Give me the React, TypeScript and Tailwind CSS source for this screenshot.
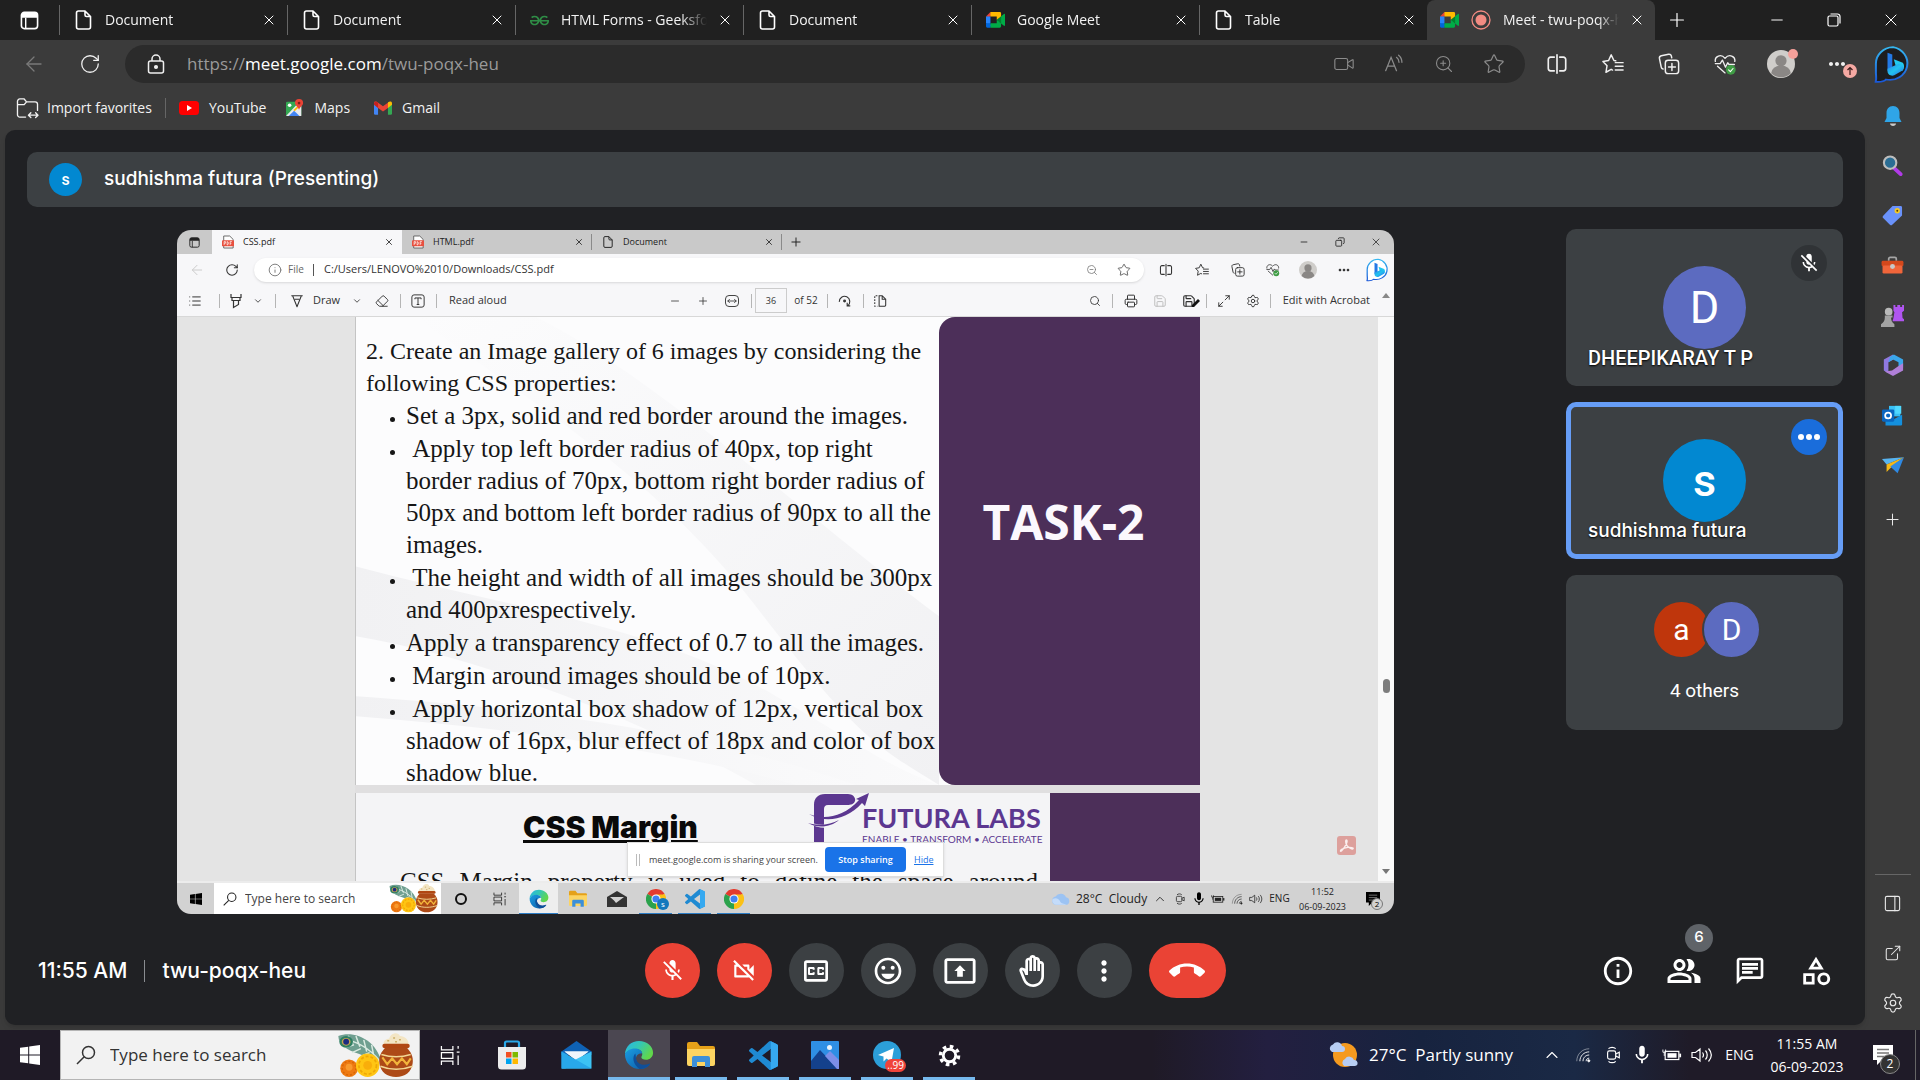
import React from "react";
import {
  ArrowLeft, RotateCw, Video, ZoomIn, ZoomOut, Star, X, Plus, Minus, Search, Settings,
  ChevronDown, ChevronUp, Eraser, Printer, Save, Maximize2, Info, List, ExternalLink, PanelRight, MoveHorizontal, Copy,
} from "lucide-react";
import {
  MdMicOff, MdOutlineVideocamOff, MdOutlineClosedCaption, MdMoreVert, MdCallEnd, MdInfoOutline, MdOutlinePeopleAlt,
  MdOutlineChat, MdOutlineCategory, MdOutlinePresentToAll, MdOutlineBackHand, MdMoreHoriz, MdOutlineEmojiEmotions, MdMic,
} from "react-icons/md";
import { SiGeeksforgeeks } from "react-icons/si";

type Kids = { children?: React.ReactNode };
type Cls = { className?: string };

/* ---------- drawings ---------- */

const DocIcon = ({ className = "" }: Cls) => (
  <svg viewBox="0 0 16 20" className={className} fill="none" stroke="currentColor" strokeWidth="1.6" strokeLinejoin="round">
    <path d="M3 1h6.500L15 6.500V17a2 2 0 0 1-2 2H3a2 2 0 0 1-2-2V3a2 2 0 0 1 2-2zM9.500 1v4a1.500 1.500 0 0 0 1.500 1.500h4" />
  </svg>
);

const TabActions = ({ className = "" }: Cls) => (
  <svg viewBox="0 0 20 20" className={className}>
    <rect x="1.500" y="1.500" width="17" height="17" rx="3" fill="none" stroke="currentColor" strokeWidth="1.700" />
    <path d="M1.500 4.500a3 3 0 0 1 3-3h11a3 3 0 0 1 3 3V7h-17z" fill="currentColor" />
    <path d="M6 7v11.500" stroke="currentColor" strokeWidth="1.500" />
  </svg>
);

const MeetLogo = ({ className = "" }: Cls) => (
  <svg viewBox="0 0 87.500 72" className={className}>
    <path fill="#00832d" d="M49.500 36l8.530 9.750 11.470 7.330 2-17.020-2-16.640-11.690 6.440z" />
    <path fill="#0066da" d="M0 51.500V66c0 3.315 2.685 6 6 6h14.500l3-10.960-3-9.540-9.950-3z" />
    <path fill="#e94235" d="M20.500 0L0 20.500l10.550 3 9.950-3 2.950-9.410z" />
    <path fill="#2684fc" d="M20.500 20.500H0v31h20.500z" />
    <path fill="#00ac47" d="M82.600 8.680L69.500 19.420v33.660l13.160 10.790c1.970 1.540 4.850.135 4.850-2.370V11c0-2.535-2.945-3.925-4.910-2.320zM49.500 36v15.500h-29V72h43c3.315 0 6-2.685 6-6V53.080z" />
    <path fill="#ffba00" d="M63.500 0h-43v20.500h29V36l20-16.570V6c0-3.315-2.685-6-6-6z" />
  </svg>
);

const PdfIcon = () => (
  <svg viewBox="0 0 14 16" className="h-3.5 w-3">
    <path d="M2 1h7l4 4v10H2z" fill="#fff" stroke="#555" />
    <rect x="0" y="6" width="14" height="7" rx="1" fill="#e8503f" />
    <path d="M2.500 11.500v-4h1.500v2H2.500M6 7.500v4c2 0 2-4 0-4M9.500 11.500v-4h2M9.500 9.500h1.500" stroke="#fff" strokeWidth=".8" fill="none" />
  </svg>
);

const Bing = ({ className = "", dark = false }: Cls & { dark?: boolean }) => (
  <svg viewBox="0 0 38 46" preserveAspectRatio="none" className={className}>
    <defs>
      <linearGradient id="bingRing" x1="0" y1="0" x2="0" y2="1"><stop offset="0" stopColor="#35b8f1" /><stop offset="1" stopColor="#1a58d8" /></linearGradient>
      <linearGradient id="bingB" x1="0" y1="0" x2="1" y2="1"><stop offset="0" stopColor="#2a7de8" /><stop offset=".5" stopColor="#22c3ee" /><stop offset="1" stopColor="#2a6df0" /></linearGradient>
    </defs>
    <path d="M19 2.500a17.500 19.500 0 1 1-7 38.200c-1.500 1.800-5.500 3.200-10.300 2.700 1-3.400.3-6 .2-10.400V22A17.500 19.500 0 0 1 19 2.500z" fill={dark ? "#1d1d1f" : "#fff"} stroke="url(#bingRing)" strokeWidth="2" />
    <path d="M13.500 9l4.800 2.300v15.400l-4.800 4z" fill="#2379e6" />
    <path d="M19.800 16.800l9 4.200c2 3 1.500 7.500-.8 9.600l-6-4.600z" fill="#22c9ee" />
    <path d="M13.500 28l5-2.500 6.500-3.500c4 .5 5.500 4.500 3.500 8.200l-8.300 5.600c-3 1.300-6.700-.8-6.700-4.800z" fill="url(#bingB)" />
  </svg>
);

const ReadAloud = () => (
  <svg viewBox="0 0 24 24" className="size-5" fill="none" stroke="currentColor" strokeWidth="1.500" strokeLinecap="round">
    <path d="M2 20L8.500 4 15 20M4.500 14.500h8M15 4c2 1.500 3 3.500 3 6M17.500 1.500c2.500 2 4 5 4 8.500" />
  </svg>
);

const Split = ({ className = "" }: Cls) => (
  <svg viewBox="0 0 24 24" className={className} fill="none" stroke="currentColor" strokeWidth="1.800" strokeLinecap="round">
    <path d="M12 2v20M9 4.500H5a2.500 2.500 0 0 0-2.500 2.500v10A2.500 2.500 0 0 0 5 19.500h4M15 4.500h4A2.500 2.500 0 0 1 21.500 7v10a2.500 2.500 0 0 1-2.500 2.500h-4" />
  </svg>
);

const Favs = ({ className = "" }: Cls) => (
  <svg viewBox="0 0 24 24" className={className} fill="none" stroke="currentColor" strokeWidth="1.600" strokeLinejoin="round" strokeLinecap="round">
    <path d="M15 8.500l-2-.3L10 2 7.200 8.200l-6.200 1 4.500 4.700L4.300 21l5.700-3.200 1.500.8M14.500 10.500H23M14.500 14.500H23M14.500 18.500H23" />
  </svg>
);

const Collections = ({ className = "" }: Cls) => (
  <svg viewBox="0 0 24 24" className={className} fill="none" stroke="currentColor" strokeWidth="1.600" strokeLinecap="round" strokeLinejoin="round">
    <rect x="8" y="8" width="14.500" height="14.500" rx="3" />
    <path d="M15.200 11.500v7.500M11.500 15.200H19M5.500 17.500c-1.200-.2-1.800-1-2-2L1.600 6.200c-.3-1.700.5-2.900 2-3.200l8-1.700c1.500-.2 2.600.5 3 2l.4 2" />
  </svg>
);

const Essentials = ({ className = "" }: Cls) => (
  <svg viewBox="0 0 26 26" className={className} fill="none" stroke="currentColor" strokeWidth="1.500" strokeLinecap="round" strokeLinejoin="round">
    <path d="M1.500 9.500C.5 3.500 8 .5 12.500 6 17 .5 24.500 3.500 23.500 9.500M1.500 12H7l2.500-4 3.500 8 2.500-5 1.500 2h6M4 15l8.500 7.500" />
    <circle cx="19" cy="19" r="5.500" fill="#3f9c45" stroke="none" />
    <path d="M16.500 19l2 2 3-3.500" stroke="#fff" strokeWidth="1.200" />
  </svg>
);

const Avatar = ({ className = "" }: Cls) => (
  <svg viewBox="0 0 30 30" className={className}>
    <circle cx="15" cy="15" r="15" fill="#cfcdca" />
    <circle cx="15" cy="11.500" r="6" fill="#8a8785" />
    <path d="M4.500 25a10.500 8.500 0 0 1 21 0A15 15 0 0 1 4.500 25z" fill="#8a8785" />
  </svg>
);

const Edge = ({ className = "" }: Cls) => (
  <svg viewBox="0 0 32 32" className={className}>
    <defs>
      <linearGradient id="edgeTop" x1="0" y1="0" x2="1" y2=".5"><stop offset="0" stopColor="#28b5e8" /><stop offset=".5" stopColor="#34c7b4" /><stop offset="1" stopColor="#61d74b" /></linearGradient>
      <linearGradient id="edgeLow" x1="0" y1="0" x2="1" y2="1"><stop offset="0" stopColor="#1b9de2" /><stop offset="1" stopColor="#0c59a4" /></linearGradient>
    </defs>
    <path d="M1 15C1.500 6.500 8 1 16 1c8.500 0 15 6 15 12.500 0 4.500-3.500 7.500-7.500 7.500-3 0-5-1-5-2.500 0-1 1-1.500 1-3.500 0-3-2.800-5.500-6.500-5.500C7.500 9.500 3 12 1 15z" fill="url(#edgeTop)" />
    <path d="M1 15c1.800-3.500 5.500-6 10.500-6 4 0 7.500 2 8 5-5 0-7.500 3.500-6.500 7.500 1.200 4.800 7.500 7.500 14.500 4.500C25 29.500 21 31 16.500 31 8 31 1 24.500 1 15z" fill="url(#edgeLow)" />
    <path d="M12 14.500c-3.500 4-2.500 11.500 4.500 16.300 4.500.2 8.500-1.500 11-4.800.5-.8 0-1-.6-.7-6 2.700-12.500.7-13.900-4.800-.5-2-.2-4.500-1-6z" fill="#0f4f99" />
  </svg>
);

const Chrome = ({ className = "" }: Cls) => (
  <svg viewBox="0 0 24 24" className={className}>
    <path d="M12 12L1.600 6A12 12 0 0 1 22.400 6z" fill="#e33b2e" />
    <path d="M12 12l10.400-6A12 12 0 0 1 12 24z" fill="#fbc116" />
    <path d="M12 12v12A12 12 0 0 1 1.600 6z" fill="#2ba24c" />
    <path d="M12 6.500h10.700L17 14z" fill="#fbc116" />
    <circle cx="12" cy="12" r="5.500" fill="#fff" />
    <circle cx="12" cy="12" r="4.300" fill="#3f7ff0" />
  </svg>
);

const VsCode = ({ className = "" }: Cls) => (
  <svg viewBox="0 0 24 24" className={className}>
    <path fill="#1f8ad2" d="M23.150 2.587L18.210.210a1.494 1.494 0 0 0-1.705.290l-9.460 8.630-4.120-3.128a.999.999 0 0 0-1.276.057L.327 7.261A1 1 0 0 0 .326 8.740L3.899 12 .326 15.260a1 1 0 0 0 .001 1.479L1.650 17.940a.999.999 0 0 0 1.276.057l4.120-3.128 9.460 8.630a1.492 1.492 0 0 0 1.704.290l4.942-2.377A1.500 1.500 0 0 0 24 20.060V3.939a1.500 1.500 0 0 0-.850-1.352zm-5.146 14.861L10.826 12l7.178-5.448v10.896z" />
    <path fill="#36a9f0" d="M18 .2l5.150 2.387A1.500 1.500 0 0 1 24 3.940v16.120a1.500 1.500 0 0 1-.850 1.350L18 23.800z" />
  </svg>
);

const Folder = ({ className = "" }: Cls) => (
  <svg viewBox="0 0 28 28" className={className}>
    <path d="M0 3a2 2 0 0 1 2-2h8l3 4h13a2 2 0 0 1 2 2v4H0z" fill="#e5a118" />
    <path d="M0 8h28v15a2 2 0 0 1-2 2H2a2 2 0 0 1-2-2z" fill="#fcd462" />
    <path d="M5 26v-9a2 2 0 0 1 2-2h14a2 2 0 0 1 2 2v9h-5v-5h-8v5z" fill="#3c8fd9" />
  </svg>
);

const Festival = ({ className = "" }: Cls) => (
  <svg viewBox="0 0 80 46" className={className}>
    <path d="M2 3C12-1 24 2 32 8c7 5 11 12 14 20-9-3-17-4-24-7C12 18 2 12 2 3z" fill="#6f9f90" />
    <path d="M6 6c14 2 28 10 38 22M12 3l5 8M20 3l4 11M28 7l3 12M8 15l10-3M16 20l9-4M27 23l7-3M36 12l2 10" stroke="#dcebe2" strokeWidth="1.500" fill="none" />
    <ellipse cx="10" cy="9" rx="7" ry="6" fill="#2f7f62" />
    <ellipse cx="10" cy="9" rx="4.500" ry="4" fill="#c9a350" />
    <circle cx="10" cy="9" r="3" fill="#1c2b80" />
    <circle cx="13" cy="36" r="9" fill="#ee7a12" />
    <circle cx="13" cy="36" r="7" fill="none" stroke="#d96606" strokeWidth="1.500" strokeDasharray="2 2" />
    <circle cx="13" cy="35" r="3.500" fill="#f99a2d" />
    <circle cx="32" cy="33" r="12" fill="#ffc513" />
    <circle cx="32" cy="33" r="9" fill="none" stroke="#efa805" strokeWidth="1.800" strokeDasharray="3 2" />
    <circle cx="32" cy="33" r="4.500" fill="#f9ae0a" />
    <path d="M48 12c0-4 3-6 6-6 1-6 9-8 11-3 5 0 9 4 9 9z" fill="#f3e5c4" />
    <path d="M52 8h2M58 5h2M64 7h2M60 9h2" stroke="#cdb06a" strokeWidth="1.500" />
    <rect x="47" y="11" width="28" height="4.500" rx="2.200" fill="#b04713" />
    <path d="M50 15h22c4 4 7 9 6 16-1 9-8 14-17 14s-16-5-17-14c-1-7 2-12 6-16z" fill="#ad4a17" />
    <path d="M46 22c10 3 20 3 30 0M45 34c10 4 22 4 33 0" stroke="#f2d795" strokeWidth="1.500" fill="none" />
    <path d="M47 25l5 7 5-6 5 6 5-6 5 6 4-6" stroke="#f2b53b" strokeWidth="2.200" fill="none" />
  </svg>
);

const WinLogo = ({ className = "" }: Cls) => (
  <svg viewBox="0 0 20 20" className={className} fill="currentColor">
    <path d="M0 2.800L8.200 1.700v7.800H0zM9.200 1.500L20 0v9.500H9.200zM0 10.500h8.200v7.800L0 17.200zM9.200 10.500H20V20L9.200 18.500z" />
  </svg>
);

const TaskView = ({ className = "" }: Cls) => (
  <svg viewBox="0 0 22 22" className={className} fill="none" stroke="currentColor" strokeWidth="1.300">
    <path d="M1.500 1v4h12V1M1.500 21v-4h12v4M1.500 8h12v6h-12zM19 1v3M19 11v10M17.500 7.500h3" />
  </svg>
);

const MagnifierThin = ({ className = "" }: Cls) => (
  <svg viewBox="0 0 20 20" className={className} fill="none" stroke="currentColor" strokeWidth="1.500">
    <circle cx="12.500" cy="7.500" r="6" /><path d="M8.200 11.800L1 19" />
  </svg>
);

const Wifi = ({ className = "" }: Cls) => (
  <svg viewBox="0 0 18 18" className={className} fill="none" stroke="currentColor">
    <path d="M2 16C2 8 8 2 16 2" opacity=".5" /><path d="M5.500 16C5.500 10 10 5.500 16 5.500M9 16c0-4 3-7 7-7M12.500 16c0-2 1.500-3.500 3.500-3.500" />
    <circle cx="15.500" cy="15.500" r="1.200" fill="currentColor" />
  </svg>
);

const CamTray = ({ className = "" }: Cls) => (
  <svg viewBox="0 0 18 20" className={className} fill="none" stroke="currentColor" strokeWidth="1.300">
    <rect x="3" y="5.500" width="9" height="9" rx="2" /><path d="M12 9l4-2v6l-4-2M4 3c2-2 6-2 8 0M4 17c2 2 6 2 8 0" />
  </svg>
);

const Battery = ({ className = "" }: Cls) => (
  <svg viewBox="0 0 22 14" className={className}>
    <rect x="3.500" y="3" width="15" height="9" fill="none" stroke="currentColor" strokeWidth="1.300" />
    <rect x="6" y="5" width="10" height="5" fill="currentColor" /><rect x="19" y="5.500" width="2" height="4" fill="currentColor" />
    <path d="M1 1v3h3V1M2.500 4v4" stroke="currentColor" fill="none" />
  </svg>
);

const Volume = ({ className = "" }: Cls) => (
  <svg viewBox="0 0 22 18" className={className} fill="none" stroke="currentColor" strokeWidth="1.200">
    <path d="M1 6.500h3.500L9 3v12l-4.500-3.500H1zM11.500 6.500c1.200 1.500 1.200 3.500 0 5M14.500 4.500c2.300 2.500 2.300 6.500 0 9M17.500 2.500c3.500 4 3.500 9 0 13" />
  </svg>
);

const Notif = ({ className = "" }: Cls) => (
  <svg viewBox="0 0 20 20" className={className}>
    <path d="M0 0h20v15H9l-5 5v-5H0z" fill="currentColor" />
    <path d="M4 4.500h12M4 8h12M4 11.500h8" stroke="#777" strokeWidth="1.300" />
  </svg>
);

const Cloud = ({ className = "" }: Cls) => (
  <svg viewBox="0 0 24 16" className={className}>
    <path d="M6 15a5 5 0 0 1-.5-9.900A7 7 0 0 1 18 6a4.600 4.600 0 0 1 .5 9z" fill="#9cc3f3" />
    <path d="M6 15a5 5 0 0 1-4-7c4-2 8 0 9 3s5 2 7 4z" fill="#c4dcfa" />
  </svg>
);

const FuturaLogo = () => (
  <svg viewBox="0 0 62 52" className="h-[52px] w-[62px] shrink-0">
    <path d="M6 51V12C6 5 10 1 17 1h23c5 0 8 4 7 7-1 3-4 4-8 4H20c-3 0-4 2-4 4v35a5 3 0 0 1-10 0z" fill="#5c3790" />
    <path d="M0 28c12 7 34 6 51-18l3 2C42 34 16 40 0 30z" fill="#f5f4f7" />
    <path d="M1 21c14 6 34 4 50-14l-3-1 13-6-4 13-3-3C38 28 16 30 1 21zM0 30c10 3 22 2 31-3-8 7-21 9-31 3z" fill="#5c3790" />
  </svg>
);

/* ---------- small building blocks ---------- */

const IconCell = ({ label, className = "w-14", children }: Kids & { label: string; className?: string }) => (
  <button aria-label={label} className={`relative flex shrink-0 items-center justify-center ${className}`}>{children}</button>
);

const BrowserTab = ({ title, icon, active = false }: { title: string; icon: React.ReactNode; active?: boolean }) => (
  <div className={active ? "flex h-10 w-[228px] items-center rounded-t-lg bg-[#3b3b3b]" : "flex h-10 w-[228px] items-center"}>
    <span className={active ? "h-[30px] w-px" : "h-[30px] w-px bg-[#666]"} />
    <button className={active ? "flex min-w-0 flex-1 items-center gap-3 pl-3" : "flex min-w-0 flex-1 items-center gap-3 pl-3.5"}>
      <span className="flex shrink-0 items-center gap-3">{icon}</span>
      <span className="flex-1 overflow-hidden text-left text-sm whitespace-nowrap text-[#f2f2f2] [mask-image:linear-gradient(to_right,black_82%,transparent)]">{title}</span>
    </button>
    <button aria-label={`Close ${title}`} className="flex w-9 justify-center text-white"><X className="size-4" strokeWidth={1.5} /></button>
  </div>
);

const InnerTab = ({ title, icon, active = false }: { title: string; icon: React.ReactNode; active?: boolean }) => (
  <div className={active ? "flex h-6 w-[190px] items-center bg-[#f7f7f9]" : "flex h-6 w-[190px] items-center"}>
    <button className="flex flex-1 items-center gap-2 pl-[9px]">
      <span className="flex w-3.5 justify-center">{icon}</span>
      <span className="text-[9px] text-[#222]">{title}</span>
    </button>
    <button aria-label={`Close ${title}`} className="flex w-[25px] justify-center"><X className="size-2.5" strokeWidth={2} /></button>
    <span className={active ? "h-4 w-px" : "h-4 w-px bg-[#8a8a8a]"} />
  </div>
);

const Sep = ({ className = "w-3" }: Cls) => <span className={`flex shrink-0 justify-center ${className}`}><i className="h-3.5 w-px bg-[#b5b5b5]" /></span>;

const Round = ({ label, red = false, children }: Kids & { label: string; red?: boolean }) => (
  <button aria-label={label} className={red ? "flex size-[55px] items-center justify-center rounded-full bg-[#ea4335] text-white" : "flex size-[55px] items-center justify-center rounded-full bg-[#3c4043] text-white"}>{children}</button>
);

const Running = ({ label, active = false, children }: Kids & { label: string; active?: boolean }) => (
  <button aria-label={label} className={active ? "relative flex h-full w-[62px] items-center justify-center bg-[#4b4751]" : "relative flex h-full w-[62px] items-center justify-center"}>
    {children}
    <span className={active ? "absolute inset-x-0 bottom-0 h-[3px] bg-[#76b9ed]" : "absolute inset-x-[5px] bottom-0 h-[3px] bg-[#76b9ed]"} />
  </button>
);

const InnerRunning = ({ label, on = false, active = false, children }: Kids & { label: string; on?: boolean; active?: boolean }) => (
  <button aria-label={label} className={active ? "relative flex h-full w-[39px] items-center justify-center bg-[#eee]" : "relative flex h-full w-[39px] items-center justify-center"}>
    {children}
    {(on || active) && <span className={active ? "absolute inset-x-0 bottom-0 h-px bg-[#2c7cc4]" : "absolute inset-x-[3px] bottom-0 h-px bg-[#2c7cc4]"} />}
  </button>
);

/* ---------- outer browser ---------- */

const TabStrip = () => (
  <header className="flex h-10 items-center bg-[#202020] text-white">
    <IconCell label="Tab actions" className="w-[59px]"><TabActions className="size-[19px]" /></IconCell>
    <BrowserTab title="Document" icon={<DocIcon className="h-5 w-[19px]" />} />
    <BrowserTab title="Document" icon={<DocIcon className="h-5 w-[19px]" />} />
    <BrowserTab title="HTML Forms - GeeksforGeeks" icon={<SiGeeksforgeeks className="size-[19px] text-[#2f8d46]" />} />
    <BrowserTab title="Document" icon={<DocIcon className="h-5 w-[19px]" />} />
    <BrowserTab title="Google Meet" icon={<MeetLogo className="w-[19px]" />} />
    <BrowserTab title="Table" icon={<DocIcon className="h-5 w-[19px]" />} />
    <BrowserTab
      title="Meet - twu-poqx-heu"
      active
      icon={
        <>
          <MeetLogo className="w-[19px]" />
          <svg viewBox="0 0 20 20" className="size-5"><circle cx="10" cy="10" r="9" fill="none" stroke="#f28b82" strokeWidth="1.300" /><circle cx="10" cy="10" r="5.500" fill="#f28b82" /></svg>
        </>
      }
    />
    <IconCell label="New tab" className="w-11"><Plus className="size-[22px]" strokeWidth={1.3} /></IconCell>
    <div className="flex-1" />
    <IconCell label="Minimize" className="w-[57px]"><Minus className="size-[18px]" strokeWidth={1.3} /></IconCell>
    <IconCell label="Restore" className="w-[57px]">
      <svg viewBox="0 0 14 14" className="size-3.5" fill="none" stroke="currentColor" strokeWidth="1.200"><rect x="1" y="3" width="10" height="10" rx="1.500" /><path d="M3.500 1h7A2.500 2.500 0 0 1 13 3.500v7" /></svg>
    </IconCell>
    <IconCell label="Close window" className="w-[58px]"><X className="size-5" strokeWidth={1.2} /></IconCell>
  </header>
);

const AddressRow = () => (
  <div className="flex h-12 items-center text-[#f0f0f0]">
    <IconCell label="Back" className="ml-1.5 w-14 text-[#7a7a7a]"><ArrowLeft className="size-6" strokeWidth={1.3} /></IconCell>
    <IconCell label="Refresh"><RotateCw className="size-[22px]" strokeWidth={1.4} /></IconCell>
    <div className="mr-1 ml-[7px] flex h-[38px] flex-1 items-center rounded-full bg-[#2b2b2b] pr-1.5">
      <span className="flex w-[62px] justify-center">
        <svg viewBox="0 0 18 20" className="h-5 w-[18px]" fill="none" stroke="currentColor" strokeWidth="1.500"><rect x="1.500" y="7" width="15" height="12" rx="2" /><path d="M5 7V5a4 4 0 0 1 8 0v2" /><circle cx="9" cy="13" r="1.300" fill="currentColor" /></svg>
      </span>
      <p className="flex-1 text-[17px] text-[#9a9a9a]">https://<span className="text-white">meet.google.com</span>/twu-poqx-heu</p>
      <IconCell label="Camera" className="w-[50px] text-[#8c8c8c]"><Video className="size-[22px]" strokeWidth={1.2} /></IconCell>
      <IconCell label="Read aloud" className="w-[50px] text-[#8c8c8c]"><ReadAloud /></IconCell>
      <IconCell label="Zoom in" className="w-[50px] text-[#8c8c8c]"><ZoomIn className="size-5" strokeWidth={1.3} /></IconCell>
      <IconCell label="Favorite" className="w-[50px] text-[#8c8c8c]"><Star className="size-[22px]" strokeWidth={1.3} /></IconCell>
    </div>
    <IconCell label="Split screen"><Split className="size-[22px]" /></IconCell>
    <IconCell label="Favorites"><Favs className="size-[22px]" /></IconCell>
    <IconCell label="Collections"><Collections className="size-[22px]" /></IconCell>
    <IconCell label="Browser essentials"><Essentials className="size-[23px]" /></IconCell>
    <IconCell label="Profile">
      <Avatar className="size-7" />
      <span className="absolute -top-px right-[11px] size-2.5 rounded-full bg-[#f5a09a]" />
    </IconCell>
    <IconCell label="Settings and more">
      <MdMoreHoriz className="size-6" />
      <span className="absolute top-3 right-2 flex size-3.5 items-center justify-center rounded-full bg-[#f5a9a3]">
        <svg viewBox="0 0 10 10" className="size-2.5" fill="none" stroke="#3a1b1b" strokeWidth="1.200"><path d="M5 9V1.500M2.500 4L5 1.500 7.500 4" /></svg>
      </span>
    </IconCell>
  </div>
);

const FavoritesRow = () => (
  <nav className="flex h-[42px] items-center pb-0.5 text-sm text-[#f2f2f2]">
    <button className="flex items-center gap-2 pl-4">
      <svg viewBox="0 0 24 22" className="h-[21px] w-[23px]" fill="none" stroke="currentColor" strokeWidth="1.400" strokeLinecap="round" strokeLinejoin="round">
        <path d="M10 20H4a2.500 2.500 0 0 1-2.500-2.500v-14A2.500 2.500 0 0 1 4 1h4.500L11 4h9a2.500 2.500 0 0 1 2.500 2.500V13M1.500 7h7L11 4M14 18h9M15.500 15.500L13 18l2.500 2.500M20.500 15.500L23 18l-2.500 2.500" />
      </svg>
      Import favorites
    </button>
    <span className="mx-[13px] h-5 w-px bg-[#666]" />
    <a href="#youtube" className="flex items-center gap-2.5">
      <svg viewBox="0 0 20 14" className="h-3.5 w-5"><rect width="20" height="14" rx="3.500" fill="#f00" /><path d="M8 4v6l5-3z" fill="#fff" /></svg>
      YouTube
    </a>
    <a href="#maps" className="ml-5 flex items-center gap-2.5">
      <svg viewBox="0 0 20 20" className="size-[18px]">
        <rect x="0" y="3" width="17" height="16" rx="1.500" fill="#34a853" /><path d="M0 19L15 3h2v16z" fill="#e8eaed" /><path d="M3 19l6-6 6 6z" fill="#4285f4" /><path d="M9 13l6-6" stroke="#fbbc04" strokeWidth="2" />
        <path d="M14.500 0a4.500 4.500 0 0 1 4.500 4.500c0 3-3.500 4-4.500 7.500-1-3.500-4.500-4.500-4.500-7.500A4.500 4.500 0 0 1 14.500 0z" fill="#ea4335" /><circle cx="14.500" cy="4.500" r="1.500" fill="#811f18" /><circle cx="4" cy="7" r="2" fill="#fff" />
      </svg>
      Maps
    </a>
    <a href="#gmail" className="ml-6 flex items-center gap-2.5">
      <svg viewBox="0 0 20 15" className="h-3.5 w-[18px]">
        <path d="M0 2h4.500v13H1.500A1.500 1.500 0 0 1 0 13.500z" fill="#4285f4" /><path d="M15.500 2H20v11.500a1.500 1.500 0 0 1-1.500 1.500h-3z" fill="#34a853" /><path d="M0 2C0 0 2 0 3.500.8L10 5.500 16.500.8 15.500 7.500 10 11.500 4.500 7.500z" fill="#ea4335" /><path d="M15.500 7.500V1.500C17 0 20-.5 20 2.500L20 4z" fill="#fbbc04" /><path d="M0 2.500L0 4l4.500 3.500V1.500C3 0 0 0 0 2.500z" fill="#c5221f" />
      </svg>
      Gmail
    </a>
  </nav>
);

const Sidebar = () => (
  <aside className="flex w-[55px] shrink-0 flex-col items-center text-[#e8e8e8]">
    <IconCell label="Bing chat" className="h-12 w-full"><Bing dark className="h-[39px] w-[38px]" /></IconCell>
    <span className="h-[3px]" />
    <IconCell label="Notifications" className="h-[49px] w-full">
      <svg viewBox="0 0 18 20" className="h-5 w-[18px]"><path d="M9 0c4 0 6.500 3 6.500 7v5l2 4H.5l2-4V7c0-4 2.500-7 6.500-7z" fill="#2fa5e8" /><path d="M6 17.500h6c0 3.200-6 3.200-6 0z" fill="#c9c9c9" /></svg>
    </IconCell>
    <IconCell label="Search" className="h-[50px] w-full">
      <svg viewBox="0 0 22 22" className="size-[21px]"><path d="M13 14l6.500 6" stroke="#b13ae8" strokeWidth="4" strokeLinecap="round" /><circle cx="8.500" cy="8" r="6.500" fill="#2a6d94" stroke="#bdbdbd" strokeWidth="2.200" /></svg>
    </IconCell>
    <IconCell label="Shopping" className="h-[50px] w-full">
      <svg viewBox="0 0 22 22" className="size-[21px]"><path d="M11 1h8.500A1.500 1.500 0 0 1 21 2.500V11L11 20.500a2 2 0 0 1-3 0L1.500 14a2 2 0 0 1 0-3z" fill="#6a92fb" /><circle cx="16" cy="6" r="2.800" fill="#f5c928" /><circle cx="16" cy="6" r="1" fill="#574100" /></svg>
    </IconCell>
    <IconCell label="Tools" className="h-[50px] w-full">
      <svg viewBox="0 0 24 20" className="h-[19px] w-[23px]"><path d="M8 5V3a1.500 1.500 0 0 1 1.500-1.500h5A1.500 1.500 0 0 1 16 3v2" stroke="#a6a6a6" strokeWidth="1.800" fill="none" /><rect x=".5" y="5" width="23" height="6" rx="1.500" fill="#d4481c" /><rect x="1.500" y="10" width="21" height="8.500" rx="1.500" fill="#f0653a" /><circle cx="12" cy="11" r="2.600" fill="#c8c8c8" /></svg>
    </IconCell>
    <IconCell label="Games" className="h-[50px] w-full">
      <svg viewBox="0 0 24 24" className="size-[23px]"><path d="M13 1h2v2h2V1h3v2h2V1h2v6l-2 1.500.500 6L24 16v2H12l1-3.500 1-6L13 7z" fill="#b055f0" /><circle cx="8" cy="8" r="4" fill="#b9b9b9" /><path d="M4 12h8v2h-1.500c0 3 1 5 3.500 7v3H0v-3c3-2 4-4 4-7z" fill="#a3a3a3" /></svg>
    </IconCell>
    <IconCell label="Microsoft 365" className="h-[50px] w-full">
      <svg viewBox="0 0 24 24" className="size-[22px]"><path d="M12 .500L2 6v12l5 3V9l5.500-3z" fill="#8f79e0" /><path d="M9 3l4-2.500L23 6v9l-5-2V9l-6-3-5 3z" fill="#3aa6ea" /><path d="M23 10v8l-11 6-9-5 8-1 7-5z" fill="#b07fd8" /></svg>
    </IconCell>
    <IconCell label="Outlook" className="h-[50px] w-full">
      <svg viewBox="0 0 24 24" className="size-[21px]"><path d="M8 1h13v12H8z" fill="#39c0f5" /><path d="M15 1h7v9h-7z" fill="#50d9ff" /><path d="M4 12l10 4 9-5v11a1.500 1.500 0 0 1-1.500 1.500H4z" fill="#1490df" /><rect x="0" y="5" width="14" height="14" rx="1.500" fill="#0a66c0" /><circle cx="7" cy="12" r="3.400" fill="none" stroke="#fff" strokeWidth="2" /></svg>
    </IconCell>
    <IconCell label="Drop" className="h-[50px] w-full">
      <svg viewBox="0 0 24 18" className="h-[17px] w-[22px]"><path d="M0 2L24 0 5 8z" fill="#58b4f0" /><path d="M24 0L5 8v8l4-4z" fill="#f6b816" /><path d="M24 0L9 10l8 7.500z" fill="#2f8ae4" /></svg>
    </IconCell>
    <IconCell label="Customize" className="h-[58px] w-full"><Plus className="size-[19px]" strokeWidth={1.3} /></IconCell>
    <div className="flex-1" />
    <span className="h-px w-9 bg-[#666]" />
    <span className="h-[3px]" />
    <IconCell label="Hide sidebar" className="h-[50px] w-full"><PanelRight className="size-[19px]" strokeWidth={1.4} /></IconCell>
    <IconCell label="Open externally" className="h-[50px] w-full"><ExternalLink className="size-[18px]" strokeWidth={1.4} /></IconCell>
    <IconCell label="Settings" className="mb-0.5 h-[50px] w-full"><Settings className="size-[22px]" strokeWidth={1.3} /></IconCell>
  </aside>
);

/* ---------- presented screen ---------- */

const Folds = () => (
  <svg viewBox="0 0 583 469" preserveAspectRatio="none" className="absolute inset-0 h-full w-full" aria-hidden="true">
    <defs>
      <linearGradient id="fold" x1="0" y1="0" x2="1" y2="1"><stop offset="0" stopColor="#fcfcfd" /><stop offset="1" stopColor="#f1f1f3" /></linearGradient>
      <linearGradient id="foldLow" x1="0" y1="0" x2="1" y2="0"><stop offset="0" stopColor="#f1f1f3" /><stop offset="1" stopColor="#fafafb" /></linearGradient>
    </defs>
    <path d="M60 0C180 90 300 160 400 290S520 430 583 469V300C450 200 300 60 180 0z" fill="url(#fold)" />
    <path d="M0 250c150 40 300 60 420 130 70 40 110 70 163 89H400C280 400 120 340 0 320z" fill="url(#foldLow)" />
    <path d="M0 380c150 10 330 30 500 89h-60C300 430 130 410 0 400z" fill="url(#foldLow)" />
  </svg>
);

const PresentedBrowserChrome = () => (
  <>
    <div className="flex h-6 items-center bg-[#c9c9c9] text-[#222]">
      <IconCell label="Tab actions" className="w-[35px]"><TabActions className="size-[11px]" /></IconCell>
      <InnerTab title="CSS.pdf" active icon={<PdfIcon />} />
      <InnerTab title="HTML.pdf" icon={<PdfIcon />} />
      <InnerTab title="Document" icon={<DocIcon className="h-3 w-3" />} />
      <IconCell label="New tab" className="w-7"><Plus className="size-3.5" strokeWidth={1.7} /></IconCell>
      <div className="flex-1" />
      <IconCell label="Minimize" className="w-9"><Minus className="size-2.5" strokeWidth={2} /></IconCell>
      <IconCell label="Restore" className="w-9"><Copy className="size-2.5 -scale-x-100" strokeWidth={2} /></IconCell>
      <IconCell label="Close" className="w-9"><X className="size-3" strokeWidth={1.5} /></IconCell>
    </div>
    <div className="flex h-[31px] items-center bg-[#f7f7f9] text-[#333]">
      <IconCell label="Back" className="w-10 text-[#ccc]"><ArrowLeft className="size-4" strokeWidth={1.5} /></IconCell>
      <IconCell label="Refresh" className="w-[30px]"><RotateCw className="size-3.5" strokeWidth={1.8} /></IconCell>
      <div className="mr-1 ml-[7px] flex h-6 flex-1 items-center rounded-full bg-white text-[11px] text-[#333] shadow-sm">
        <span className="flex w-[34px] justify-end pr-1.5 text-[#777]"><Info className="size-3.5" strokeWidth={1.6} /></span>
        <span className="w-[25px] text-[10px] text-[#666]">File</span>
        <i className="h-3 w-px bg-[#555]" />
        <span className="flex-1 pl-2.5">C:/Users/LENOVO%2010/Downloads/CSS.pdf</span>
        <IconCell label="Zoom out" className="w-8 text-[#777]"><ZoomOut className="size-3" strokeWidth={1.6} /></IconCell>
        <IconCell label="Favorite" className="mr-1 w-8 text-[#555]"><Star className="size-3.5" strokeWidth={1.5} /></IconCell>
      </div>
      <IconCell label="Split screen" className="w-9"><Split className="size-3.5" /></IconCell>
      <IconCell label="Favorites" className="w-9"><Favs className="size-3.5" /></IconCell>
      <IconCell label="Collections" className="w-[35px]"><Collections className="size-3.5" /></IconCell>
      <IconCell label="Browser essentials" className="w-[35px]"><Essentials className="size-3.5" /></IconCell>
      <IconCell label="Profile" className="w-9"><Avatar className="size-[18px]" /></IconCell>
      <IconCell label="More" className="w-9"><MdMoreHoriz className="size-4" /></IconCell>
      <IconCell label="Bing chat" className="w-8"><Bing className="size-6" /></IconCell>
    </div>
    <div className="flex h-8 items-center border-b border-[#d8d8d8] bg-[#f7f7f9] text-[11px] text-[#333]">
      <div className="flex w-[484px] shrink-0 items-center">
        <IconCell label="Contents" className="w-9"><List className="size-3.5" strokeWidth={1.7} /></IconCell>
        <Sep />
        <IconCell label="Highlight" className="w-[22px]">
          <svg viewBox="0 0 14 16" className="h-4 w-3.5" fill="none" stroke="currentColor" strokeWidth="1.200"><path d="M2 1v3.500h10V1M3 4.500v3h8v-3M4.500 8v6.500l5-3V8" /></svg>
        </IconCell>
        <IconCell label="Highlight options" className="w-[22px]"><ChevronDown className="size-2.5" /></IconCell>
        <Sep />
        <span className="flex w-8 justify-center">
          <svg viewBox="0 0 16 16" className="size-3.5" fill="none" stroke="currentColor" strokeWidth="1.200" strokeLinejoin="round"><path d="M1.500 2h13M3 2l4 10 1 2.500L9 12l4-10M5.500 6h5" /></svg>
        </span>
        <button className="w-8 text-left">Draw</button>
        <IconCell label="Draw options" className="w-6"><ChevronDown className="size-2.5" /></IconCell>
        <IconCell label="Erase" className="w-[25px]"><Eraser className="size-3.5" strokeWidth={1.6} /></IconCell>
        <Sep />
        <IconCell label="Add text" className="w-6">
          <svg viewBox="0 0 16 16" className="size-3.5" fill="none" stroke="currentColor" strokeWidth="1.100"><rect x="1" y="1" width="14" height="14" rx="2.500" /><path d="M4.500 6V4.500h7V6M8 4.500v7.500M6.500 12h3" /></svg>
        </IconCell>
        <Sep />
        <button className="pl-[7px]">Read aloud</button>
      </div>
      <IconCell label="Zoom out" className="w-7"><Minus className="size-3" strokeWidth={1.6} /></IconCell>
      <IconCell label="Zoom in" className="w-7"><Plus className="size-3" strokeWidth={1.6} /></IconCell>
      <IconCell label="Fit to width" className="w-[30px]"><span className="flex h-3 w-3.5 items-center justify-center rounded-sm border border-[#444]"><MoveHorizontal className="size-2.5" /></span></IconCell>
      <Sep className="w-2" />
      <input aria-label="Page number" defaultValue="36" className="h-[25px] w-8 border border-[#ccc] bg-transparent text-center text-[9px]" />
      <span className="w-[38px] text-center text-[10px]">of 52</span>
      <Sep className="w-1" />
      <IconCell label="Rotate" className="w-8">
        <svg viewBox="0 0 16 16" className="size-3.5" fill="none" stroke="currentColor" strokeWidth="1.300"><path d="M1.500 9a6 6 0 1 1 9.500 4.500M14 13.500h-3.500V10" /><circle cx="7.500" cy="8" r="1" fill="currentColor" /></svg>
      </IconCell>
      <Sep className="w-1" />
      <IconCell label="Page view" className="w-[30px]">
        <svg viewBox="0 0 16 16" className="size-3.5" fill="none" stroke="currentColor" strokeWidth="1.200"><path d="M7 2v12h6a1.500 1.500 0 0 0 1.500-1.500V6l-4-4zM10.500 2v4h4" /><path d="M5 2H2v12h3" strokeDasharray="2 1.500" /></svg>
      </IconCell>
      <div className="flex-1" />
      <IconCell label="Find" className="w-7"><Search className="size-3" strokeWidth={1.7} /></IconCell>
      <Sep className="w-2" />
      <IconCell label="Print" className="w-[29px]"><Printer className="size-3.5" strokeWidth={1.7} /></IconCell>
      <IconCell label="Save" className="w-[29px] text-[#bbb]"><Save className="size-3.5" strokeWidth={1.6} /></IconCell>
      <IconCell label="Save as" className="w-[29px]">
        <Save className="size-3.5" strokeWidth={2} />
        <svg viewBox="0 0 10 10" className="absolute top-1 left-[15px] size-2.5"><path d="M8 1l2 2-6 6H2V7z" fill="#111" /></svg>
      </IconCell>
      <Sep className="w-1.5" />
      <IconCell label="Full screen" className="w-[29px]"><Maximize2 className="size-3.5" strokeWidth={1.6} /></IconCell>
      <IconCell label="Settings" className="w-[29px]"><Settings className="size-3.5" strokeWidth={1.6} /></IconCell>
      <Sep className="w-1.5" />
      <button className="mr-2 ml-[9px] text-[11px] whitespace-nowrap">Edit with Acrobat</button>
      <span className="mb-3 flex w-4 justify-center"><svg viewBox="0 0 8 6" className="h-1.5 w-2"><path d="M0 6h8L4 1z" fill="#888" /></svg></span>
    </div>
  </>
);

const DocumentPages = () => (
  <div className="relative flex h-[564px] overflow-hidden bg-[#e4e4e4]">
    <div className="flex flex-1 justify-center">
      <div className="w-[845px]">
        <section className="flex h-[468px] border-l border-[#c4c4c4] bg-[#fcfcfd]">
          <div className="relative w-[583px] shrink-0 pt-[18px] pl-2.5 font-['Liberation_Serif',serif] text-[25px] leading-8 whitespace-nowrap text-[#161616]">
            <Folds />
            <div className="relative">
              <p className="text-2xl leading-8">2. Create an Image gallery of 6 images by considering the<br />following CSS properties:</p>
              <ul className="flex list-disc flex-col gap-px pt-px pl-10 marker:text-base">
                <li>Set a 3px, solid and red border around the images.</li>
                <li>&nbsp;Apply top left border radius of 40px, top right<br />border radius of 70px, bottom right border radius of<br />50px and bottom left border radius of 90px to all the<br />images.</li>
                <li>&nbsp;The height and width of all images should be 300px<br />and 400pxrespectively.</li>
                <li>Apply a transparency effect of 0.7 to all the images.</li>
                <li>&nbsp;Margin around images should be of 10px.</li>
                <li>&nbsp;Apply horizontal box shadow of 12px, vertical box<br />shadow of 16px, blur effect of 18px and color of box<br />shadow blue.</li>
              </ul>
            </div>
          </div>
          <div className="flex flex-1 justify-center rounded-l-2xl bg-[#4c2f59] pt-[175px] pr-3">
            <h1 className="h-fit font-['Open_Sans',sans-serif] text-5xl leading-[60px] font-bold text-[#fbf8fd]">TASK-2</h1>
          </div>
        </section>
        <div className="h-2 bg-[#e0dfe0]" />
        <section className="flex h-[88px] border-l border-[#c4c4c4] bg-[#f4f4f6]">
          <div className="w-[694px] shrink-0">
            <div className="flex h-[73px] items-start">
              <h2 className="w-[452px] pt-[18px] pl-[167px] font-['Inter',sans-serif] text-[30px] leading-8 font-black whitespace-nowrap text-[#0a0a0a] underline decoration-[3px]">CSS Margin</h2>
              <FuturaLogo />
              <div className="-ml-2 pt-[11px] whitespace-nowrap text-[#5c3790]">
                <p className="font-['Lato',sans-serif] text-[27px] leading-7 font-bold">FUTURA LABS</p>
                <p className="font-['Lato',sans-serif] text-[10px] leading-3.5">ENABLE • TRANSFORM • ACCELERATE</p>
              </div>
            </div>
            <p className="ml-11 w-[638px] font-['Liberation_Serif',serif] text-[25px] leading-8 whitespace-nowrap text-[#161616] [text-align-last:justify]">CSS Margin property is used to define the space around</p>
          </div>
          <div className="flex-1 bg-[#4c2f59]" />
        </section>
      </div>
    </div>
    <div className="flex w-4 flex-col items-center bg-[#f9f9f9] pb-1.5">
      <span className="mt-[362px] h-3.5 w-[7px] rounded-sm bg-[#7d7d7d]" />
      <svg viewBox="0 0 8 6" className="mt-auto h-1.5 w-2"><path d="M0 0h8L4 5z" fill="#777" /></svg>
    </div>
    <span className="absolute right-[38px] bottom-[26px] flex size-[19px] items-center justify-center rounded-[3px] bg-[#dda09c]">
      <svg viewBox="0 0 24 24" className="size-4" fill="none" stroke="#fbeeee" strokeWidth="2"><path d="M11 3c3 0 0 9-7 16-2 2-3 0 0-2 5-3 14-4 17-2 1 1-1 2-3 1-5-2-8-6-8-11 0-1 0-2 1-2z" /></svg>
    </span>
    <div className="absolute bottom-1 left-[450px] flex h-[35px] w-[317px] items-center border border-[#ddd] bg-white text-[9px] text-[#444] shadow">
      <span className="mr-[9px] ml-2 h-3 w-1 shrink-0 border-x border-[#bbb]" />
      <span className="w-[176px] shrink-0 whitespace-nowrap">meet.google.com is sharing your screen.</span>
      <button className="h-[25px] w-[81px] shrink-0 rounded-sm bg-[#1a73e8] font-semibold text-white">Stop sharing</button>
      <a href="#hide" className="ml-2 text-[#1a73e8] underline">Hide</a>
    </div>
  </div>
);

const PresentedTaskbar = () => (
  <div className="flex h-[33px] items-center border-t-2 border-[#ececec] bg-[#d2d2d2] text-[#222]">
    <IconCell label="Start" className="w-[37px] text-black"><WinLogo className="size-3" /></IconCell>
    <label className="flex h-full w-[227px] items-center bg-white">
      <span className="flex w-[31px] justify-center"><MagnifierThin className="size-3.5" /></span>
      <input aria-label="Search" placeholder="Type here to search" className="min-w-0 flex-1 bg-transparent text-xs text-[#444] placeholder:text-[#444]" />
      <Festival className="mr-0.5 h-[29px] w-[51px]" />
    </label>
    <IconCell label="Cortana" className="w-[39px]"><span className="size-3 rounded-full border-2 border-[#111]" /></IconCell>
    <IconCell label="Task view" className="w-[39px]"><TaskView className="size-3.5" /></IconCell>
    <InnerRunning label="Edge" active><Edge className="size-5" /></InnerRunning>
    <InnerRunning label="File Explorer"><Folder className="size-[18px]" /></InnerRunning>
    <InnerRunning label="Mail">
      <svg viewBox="0 0 20 16" className="h-4 w-5"><path d="M0 6l10-6 10 6v10H0z" fill="#333" /><path d="M3 6h14l-8 6-2-2.500z" fill="#d2d2d2" /></svg>
    </InnerRunning>
    <InnerRunning label="Chrome" on>
      <Chrome className="size-5" />
      <span className="absolute right-1.5 bottom-1 flex size-3 items-center justify-center rounded-full bg-[#1378bd] text-[8px] text-white">s</span>
    </InnerRunning>
    <InnerRunning label="Visual Studio Code" on><VsCode className="size-5" /></InnerRunning>
    <InnerRunning label="Chrome" on><Chrome className="size-5" /></InnerRunning>
    <div className="flex-1" />
    <Cloud className="h-3.5 w-5" />
    <span className="ml-[5px] w-[74px] text-xs whitespace-pre">28°C  Cloudy</span>
    <IconCell label="Show hidden icons" className="w-5"><ChevronUp className="size-3.5" strokeWidth={1.5} /></IconCell>
    <IconCell label="Camera in use" className="w-[19px]"><CamTray className="size-3" /></IconCell>
    <IconCell label="Microphone in use" className="w-[19px]"><MdMic className="size-4 text-black" /></IconCell>
    <IconCell label="Battery" className="w-[19px]"><Battery className="h-2.5 w-3.5" /></IconCell>
    <IconCell label="Network" className="w-[19px]"><Wifi className="size-3" /></IconCell>
    <IconCell label="Volume" className="w-[19px]"><Volume className="h-3 w-3.5" /></IconCell>
    <span className="w-[29px] text-center text-[10px]">ENG</span>
    <div className="w-[57px] text-center text-[9px] leading-[15px]"><p>11:52</p><p>06-09-2023</p></div>
    <IconCell label="Notifications" className="h-full w-[43px] text-black">
      <Notif className="size-3.5" />
      <span className="absolute right-[11px] bottom-1 flex size-3 items-center justify-center rounded-full border border-[#777] bg-[#d2d2d2] text-[8px]">2</span>
    </IconCell>
  </div>
);

/* ---------- meeting ---------- */

const Meeting = () => (
  <main className="mb-[5px] ml-[5px] flex flex-1 flex-col rounded-[10px] bg-[#202124] px-[22px] pt-[22px] font-['Roboto',sans-serif] text-white shadow-md">
    <div className="flex h-[55px] items-center gap-[22px] rounded-[10px] bg-[#3c4043] px-[22px]">
      <span className="flex size-[33px] items-center justify-center rounded-full bg-[#0288d1] text-base font-medium">s</span>
      <p className="font-['Inter',sans-serif] text-[19px] font-medium">sudhishma futura (Presenting)</p>
    </div>
    <div className="mt-[22px] flex gap-[22px]">
      <div className="flex flex-1 justify-center pt-px">
        <article className="w-full max-w-[1217px] overflow-hidden rounded-[14px] font-['Open_Sans',sans-serif]">
          <PresentedBrowserChrome />
          <DocumentPages />
          <PresentedTaskbar />
        </article>
      </div>
      <div className="flex w-[277px] shrink-0 flex-col gap-4">
        <div className="relative flex h-[157px] items-center justify-center rounded-[10px] bg-[#3c4043]">
          <span className="flex size-[83px] items-center justify-center rounded-full bg-[#5c6bc0] text-[45px]">D</span>
          <p className="absolute bottom-4 left-[22px] text-[20px] leading-6 font-medium [text-shadow:0_1px_2px_#000]">DHEEPIKARAY T P</p>
          <span className="absolute top-4 right-4 flex size-9 items-center justify-center rounded-full bg-[#303336]"><MdMicOff className="size-[22px]" /></span>
        </div>
        <div className="relative flex h-[157px] items-center justify-center rounded-[10px] border-[5px] border-[#669df6] bg-[#3c4043]">
          <span className="flex size-[83px] items-center justify-center rounded-full bg-[#0288d1] text-[45px] font-medium">s</span>
          <p className="absolute bottom-[11px] left-[17px] font-['Inter',sans-serif] text-[19px] leading-6 font-medium [text-shadow:0_1px_2px_#000]">sudhishma futura</p>
          <span className="absolute top-3 right-[11px] flex size-9 items-center justify-center gap-0.5 rounded-full bg-[#1a6ddb]">
            <i className="size-1.5 rounded-full bg-white" /><i className="size-1.5 rounded-full bg-white" /><i className="size-1.5 rounded-full bg-white" />
          </span>
        </div>
        <div className="flex h-[155px] flex-col items-center gap-[22px] rounded-[10px] bg-[#3c4043] pt-[27px]">
          <div className="flex pl-1.5 text-[30px]">
            <span className="flex size-[55px] items-center justify-center rounded-full bg-[#bf360c]">a</span>
            <span className="-my-0.5 -ml-[7px] flex size-[59px] items-center justify-center rounded-full border-2 border-[#3c4043] bg-[#5c6bc0]">D</span>
          </div>
          <p className="text-[19px] leading-6">4 others</p>
        </div>
      </div>
    </div>
    <footer className="grid flex-1 grid-cols-[1fr_auto_1fr] items-center pt-0.5 font-['Inter',sans-serif]">
      <div className="flex items-center pl-[11px] text-[21px] font-medium">
        <span>11:55 AM</span>
        <span className="mx-[17px] h-[22px] w-px bg-[#8a8d91]" />
        <span>twu-poqx-heu</span>
      </div>
      <div className="flex gap-[17px]">
        <Round label="Turn on microphone" red><MdMicOff className="size-[25px]" /></Round>
        <Round label="Turn on camera" red><MdOutlineVideocamOff className="size-[26px]" /></Round>
        <Round label="Turn on captions"><MdOutlineClosedCaption className="size-8" /></Round>
        <Round label="Send a reaction"><MdOutlineEmojiEmotions className="size-8" /></Round>
        <Round label="Present now"><MdOutlinePresentToAll className="size-[34px]" /></Round>
        <Round label="Raise hand"><MdOutlineBackHand className="size-8" /></Round>
        <Round label="More options"><MdMoreVert className="size-8" /></Round>
        <button aria-label="Leave call" className="flex h-[55px] w-[77px] items-center justify-center rounded-full bg-[#ea4335]"><MdCallEnd className="size-9" /></button>
      </div>
      <div className="-mr-1.5 flex justify-end">
        <IconCell label="Meeting details" className="w-[66px]"><MdInfoOutline className="size-[34px]" /></IconCell>
        <IconCell label="People" className="w-[66px]">
          <MdOutlinePeopleAlt className="size-9" />
          <span className="absolute -top-[29px] left-[34px] flex size-7 items-center justify-center rounded-full bg-[#5f6368] text-[15px] font-medium">6</span>
        </IconCell>
        <IconCell label="Chat" className="w-[66px]"><MdOutlineChat className="size-8" /></IconCell>
        <IconCell label="Activities" className="w-[66px]"><MdOutlineCategory className="size-[34px]" /></IconCell>
      </div>
    </footer>
  </main>
);

/* ---------- taskbar ---------- */

const Taskbar = () => (
  <div className="flex h-[50px] items-center bg-[#1f1b26] bg-[linear-gradient(to_right,#1f1a26_60%,#231f40_66%,#17233f_74%,#1a2945_82%,#1f1b28_88%)] text-white">
    <IconCell label="Start" className="w-[60px]"><WinLogo className="size-5" /></IconCell>
    <label className="flex h-full w-[360px] items-center border border-[#b5b5b5] bg-[#f2f2f2] text-[#333]">
      <span className="flex w-[49px] justify-center"><MagnifierThin className="size-5" /></span>
      <input aria-label="Search" placeholder="Type here to search" className="min-w-0 flex-1 bg-transparent text-[17px] placeholder:text-[#333]" />
      <Festival className="mr-1 h-[45px] w-[79px]" />
    </label>
    <IconCell label="Task view" className="w-[60px]"><TaskView className="size-[21px]" /></IconCell>
    <IconCell label="Microsoft Store" className="w-16">
      <svg viewBox="0 0 30 30" className="size-[30px]"><path d="M8 8V3a1.500 1.500 0 0 1 1.500-1.500h11A1.500 1.500 0 0 1 22 3v5" stroke="#2aa8e8" strokeWidth="2.200" fill="none" /><path d="M1 7h28v19a3.500 3.500 0 0 1-3.500 3.500h-21A3.500 3.500 0 0 1 1 26z" fill="#ededed" /><path d="M9 12h5.500v5.500H9z" fill="#f25022" /><path d="M15.500 12H21v5.500h-5.500z" fill="#7fba00" /><path d="M9 18.500h5.500V24H9z" fill="#00a4ef" /><path d="M15.500 18.500H21V24h-5.500z" fill="#ffb900" /></svg>
    </IconCell>
    <IconCell label="Mail" className="w-16">
      <svg viewBox="0 0 30 28" className="h-7 w-[31px]"><path d="M0 10.500L15 0l15 10.500V14H0z" fill="#0f62b5" /><path d="M3 10.500h24L15 20z" fill="#eef6fc" /><path d="M0 10.500l13 8L4 27.500H0z" fill="#1f8fdc" /><path d="M0 27.500l15-9.500 15-7.500v17z" fill="#3cc3f4" /><path d="M0 10.500L30 27.500H0z" fill="#28a8ea" /><path d="M3 10.500h24L15 17.500z" fill="#eef6fc" /></svg>
    </IconCell>
    <Running label="Edge" active><Edge className="size-[30px]" /></Running>
    <Running label="File Explorer"><Folder className="size-7" /></Running>
    <Running label="Visual Studio Code"><VsCode className="size-[29px]" /></Running>
    <Running label="Photos">
      <svg viewBox="0 0 28 28" className="size-7"><rect width="28" height="28" rx="1" fill="#2f8fe4" /><path d="M0 20L9 9l18 19H0z" fill="#14418c" /><path d="M14 15l5-5 9 9v9h-2z" fill="#7d8fe8" /><circle cx="18.500" cy="6.500" r="2.500" fill="#e9f3fb" /></svg>
    </Running>
    <Running label="Telegram">
      <svg viewBox="0 0 28 28" className="size-7"><circle cx="14" cy="14" r="14" fill="#2c9fd9" /><path d="M5 14l16-7-2.500 14-5-3.500-3 3v-5z" fill="#fff" /></svg>
      <span className="absolute right-3 bottom-2 rounded-full bg-[#f0433a] px-0.5 text-[10px] leading-[13px]">..99</span>
    </Running>
    <Running label="Settings">
      <svg viewBox="0 0 24 24" className="size-[23px]" fill="none" stroke="#fff"><circle cx="12" cy="12" r="6.500" strokeWidth="3" /><circle cx="12" cy="12" r="9.500" strokeWidth="3.500" strokeDasharray="3.730 3.730" /></svg>
    </Running>
    <div className="flex-1" />
    <svg viewBox="0 0 30 30" className="size-[30px]"><circle cx="16" cy="15" r="12" fill="#f59a1f" /><path d="M3 12a4 4 0 0 1 1-7.500 5 5 0 0 1 9 1.500 3 3 0 0 1 0 6zM15 26a4 4 0 0 1 1-7 5 5 0 0 1 9 1 3 3 0 0 1 1 6z" fill="#b7cdf3" /></svg>
    <span className="ml-2.5 w-[167px] text-[17px] whitespace-pre">27°C  Partly sunny</span>
    <IconCell label="Show hidden icons" className="w-[31px]"><ChevronUp className="size-5" strokeWidth={1.3} /></IconCell>
    <IconCell label="Network" className="w-8"><Wifi className="size-4" /></IconCell>
    <IconCell label="Camera in use" className="w-7"><CamTray className="size-[18px]" /></IconCell>
    <IconCell label="Microphone in use" className="w-[29px]"><MdMic className="size-[22px]" /></IconCell>
    <IconCell label="Battery" className="w-8"><Battery className="h-3.5 w-5" /></IconCell>
    <IconCell label="Volume" className="w-7"><Volume className="h-[18px] w-[22px]" /></IconCell>
    <span className="w-[47px] text-center text-sm">ENG</span>
    <div className="w-[88px] text-center text-sm leading-[23px] whitespace-nowrap"><p>11:55 AM</p><p>06-09-2023</p></div>
    <IconCell label="Notifications" className="h-full w-16">
      <Notif className="size-5" />
      <span className="absolute right-[15px] bottom-1.5 flex size-5 items-center justify-center rounded-full border border-[#888] bg-[#333] text-xs">2</span>
    </IconCell>
    <span className="mr-1 h-full w-px bg-[#666]" />
  </div>
);

export default function App() {
  return (
    <div className="flex min-h-screen w-full flex-col bg-[#3b3b3b] font-['Open_Sans',sans-serif]">
      <TabStrip />
      <div className="flex flex-1">
        <div className="flex min-w-0 flex-1 flex-col">
          <AddressRow />
          <FavoritesRow />
          <Meeting />
        </div>
        <Sidebar />
      </div>
      <Taskbar />
    </div>
  );
}
